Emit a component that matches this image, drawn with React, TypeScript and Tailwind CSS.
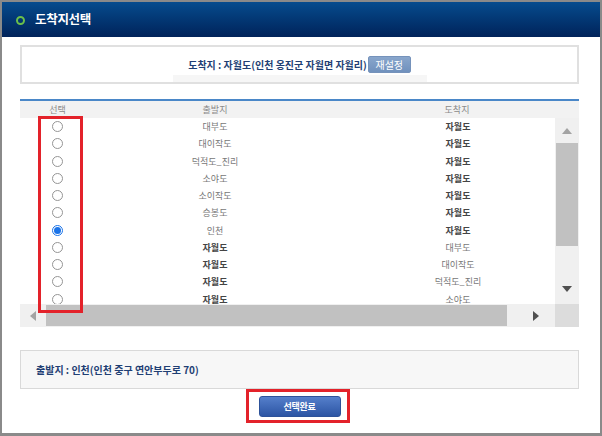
import React from "react";

type Row = { from: string; to: string; fromBold?: boolean; toBold?: boolean; checked?: boolean };

const rows: Row[] = [
  { from: "대부도", to: "자월도", toBold: true },
  { from: "대이작도", to: "자월도", toBold: true },
  { from: "덕적도_진리", to: "자월도", toBold: true },
  { from: "소야도", to: "자월도", toBold: true },
  { from: "소이작도", to: "자월도", toBold: true },
  { from: "승봉도", to: "자월도", toBold: true },
  { from: "인천", to: "자월도", toBold: true, checked: true },
  { from: "자월도", to: "대부도", fromBold: true },
  { from: "자월도", to: "대이작도", fromBold: true },
  { from: "자월도", to: "덕적도_진리", fromBold: true },
  { from: "자월도", to: "소야도", fromBold: true },
];

function Radio({ checked }: { checked?: boolean }) {
  if (checked) {
    return (
      <div className="w-[11px] h-[11px] rounded-full border border-[#1a73e8] bg-white flex items-center justify-center">
        <div className="w-[7px] h-[7px] rounded-full bg-[#1a73e8]" />
      </div>
    );
  }
  return <div className="w-[11px] h-[11px] rounded-full border border-[#959595] bg-white" />;
}

export default function App() {
  return (
    <div className="w-[602px] h-[436px] bg-white border-2 border-b-[3px] border-[#8a8a8a] relative flex flex-col font-['Noto_Sans_CJK_KR','Noto_Sans',sans-serif]">
      {/* Header */}
      <div className="h-[35px] shrink-0 bg-linear-to-b from-[#074c8e] to-[#01235a] flex items-center pl-[14px]">
        <div className="w-[9px] h-[9px] rounded-full border-[2.5px] border-[#6cc04a] mt-[1px]" />
        <div className="ml-[10px] text-white font-bold text-[12.5px] leading-none tracking-[-0.3px]">도착지선택</div>
      </div>

      <div className="flex flex-col pl-[18px] pr-[21px]">
        {/* Destination box */}
        <div className="mt-[8px] h-[39px] border-2 border-[#e0e0e0] flex justify-center">
          <div className="w-[254px] flex flex-col">
            <div className="mt-[9px] h-[17px] flex items-center justify-center">
              <span className="text-[10px] font-bold text-[#1f3f74] leading-none whitespace-nowrap">도착지 : 자월도(인천 옹진군 자월면 자월리)</span>
              <span className="ml-[1px] shrink-0 w-[43px] h-[17px] rounded-[2px] bg-linear-to-b from-[#89a6cc] to-[#7091bd] border border-[#7592bb] text-white text-[10px] flex items-center justify-center leading-none">재설정</span>
            </div>
            <div className="mt-[2px] h-[7px] bg-[#f6f6f6]" />
          </div>
        </div>

        {/* Table */}
        <div className="mt-[15px] border-t-2 border-[#4a87c8]">
          <div className="h-[17px] bg-[#f2f2f2] flex items-center text-[9px] text-[#8a8a8a] leading-none">
            <div className="w-[75px] text-center">선택</div>
            <div className="w-[240px] text-center">출발지</div>
            <div className="flex-1 text-center">도착지</div>
          </div>
          <div className="flex h-[186px]">
            <div className="flex-1 overflow-hidden">
              {rows.map((r, i) => (
                <div key={i} className="h-[17.25px] w-[561px] flex items-center text-[9px] leading-none">
                  <div className="w-[75px] shrink-0 flex justify-center">
                    <Radio checked={r.checked} />
                  </div>
                  <div className={`w-[240px] shrink-0 text-center ${r.fromBold ? "font-bold text-[#444444]" : "text-[#777777]"}`}>{r.from}</div>
                  <div className={`w-[246px] shrink-0 text-center ${r.toBold ? "font-bold text-[#444444]" : "text-[#777777]"}`}>{r.to}</div>
                </div>
              ))}
            </div>
            {/* vertical scrollbar */}
            <div className="w-[24px] bg-[#f0f0f0] flex flex-col">
              <div className="h-[25px] flex items-center justify-center">
                <div className="w-0 h-0 border-x-[5px] border-x-transparent border-b-[6px] border-b-[#a3a3a3]" />
              </div>
              <div className="h-[103px] mx-[1px] bg-[#c1c1c1]" />
              <div className="flex-1" />
              <div className="h-[25px] flex items-center justify-center pb-[6px]">
                <div className="w-0 h-0 border-x-[5px] border-x-transparent border-t-[6px] border-t-[#505050]" />
              </div>
            </div>
          </div>
          {/* horizontal scrollbar */}
          <div className="h-[23px] flex">
            <div className="flex-1 bg-[#f0f0f0] flex items-center">
              <div className="w-[26px] h-full flex items-center justify-center">
                <div className="w-0 h-0 border-y-[5px] border-y-transparent border-r-[6px] border-r-[#a3a3a3]" />
              </div>
              <div className="w-[461px] h-[21px] bg-[#c1c1c1]" />
              <div className="flex-1 h-full flex items-center justify-center pl-[10px]">
                <div className="w-0 h-0 border-y-[5px] border-y-transparent border-l-[6px] border-l-[#505050]" />
              </div>
            </div>
            <div className="w-[24px] bg-[#dcdcdc]" />
          </div>
        </div>

        {/* Departure box */}
        <div className="mt-[23px] h-[39px] border border-[#d9d9d9] bg-[#f7f7f7] flex items-center pl-[15px]">
          <span className="text-[10px] font-bold text-[#1f3f74] leading-none">출발지 : 인천(인천 중구 연안부두로 70)</span>
        </div>

        <div className="mt-[7px] self-center w-[82px] h-[21px] rounded-[3px] bg-linear-to-b from-[#557fcb] to-[#2c55a4] border border-[#2d529a] flex items-center justify-center text-white font-bold text-[9px] tracking-[-0.3px] leading-none">
          선택완료
        </div>
      </div>

      {/* red highlight annotations */}
      <div className="absolute left-[36px] top-[114px] w-[45px] h-[197px] border-[3px] border-[#e3222a] pointer-events-none" />
      <div className="absolute left-[244px] top-[387px] w-[104px] h-[34px] border-[3px] border-[#e3222a] pointer-events-none" />
    </div>
  );
}
